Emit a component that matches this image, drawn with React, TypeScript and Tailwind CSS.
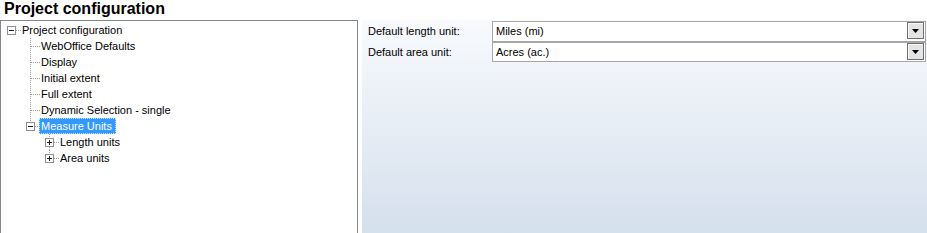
import type { ReactNode } from 'react';

type RowKind = 'root' | 'child' | 'lastChild' | 'grand' | 'lastGrand';

const dotted = { stroke: '#a0a0a0', strokeWidth: 1, strokeDasharray: '1 1' } as const;

const ExpandBox = ({ x, open }: { x: number; open: boolean }) => (
  <g shapeRendering="crispEdges">
    <rect x={x + 0.5} y={4.5} width={8} height={8} fill="#fff" stroke="#8f8f8f" />
    <line x1={x + 2} y1={8.5} x2={x + 7} y2={8.5} stroke="#1a1a1a" />
    {!open && <line x1={x + 4.5} y1={6} x2={x + 4.5} y2={11} stroke="#1a1a1a" />}
  </g>
);

// gutter drawn in page x coordinates; the panel border eats x=0
const Gutter = ({ kind }: { kind: RowKind }) => {
  const width = kind === 'root' ? 21 : kind === 'grand' || kind === 'lastGrand' ? 59 : kind === 'lastChild' ? 38 : 40;
  return (
    <svg width={width} height={16} className="shrink-0">
      <g transform="translate(-1,0)" shapeRendering="crispEdges">
        {kind === 'root' && (
          <>
            <line x1={16} y1={8.5} x2={21} y2={8.5} {...dotted} />
            <ExpandBox x={7} open />
          </>
        )}
        {kind === 'child' && (
          <>
            <line x1={30.5} y1={0} x2={30.5} y2={16} {...dotted} />
            <line x1={31} y1={8.5} x2={40} y2={8.5} {...dotted} />
          </>
        )}
        {kind === 'lastChild' && (
          <>
            <line x1={30.5} y1={0} x2={30.5} y2={4} {...dotted} />
            <line x1={35} y1={8.5} x2={39} y2={8.5} {...dotted} />
            <ExpandBox x={26} open />
          </>
        )}
        {(kind === 'grand' || kind === 'lastGrand') && (
          <>
            <line x1={49.5} y1={0} x2={49.5} y2={4} {...dotted} />
            {kind === 'grand' && <line x1={49.5} y1={13} x2={49.5} y2={16} {...dotted} />}
            <line x1={54} y1={8.5} x2={60} y2={8.5} {...dotted} />
            <ExpandBox x={45} open={false} />
          </>
        )}
      </g>
    </svg>
  );
};

const TreeRow = ({ kind, selected, children }: { kind: RowKind; selected?: boolean; children: ReactNode }) => (
  <div className="flex h-4 items-center">
    <Gutter kind={kind} />
    {selected ? (
      <span className="h-4 border border-dotted border-[#c9e2ff] bg-[#3399ff] pr-[3px] pl-[1px] leading-[14px] text-white">
        {children}
      </span>
    ) : (
      <span className="leading-4">{children}</span>
    )}
  </div>
);

const ComboBox = ({ value, tall }: { value: string; tall?: boolean }) => (
  <div
    className={`flex w-[434px] items-start justify-between border border-[#a7a7a7] bg-white ${tall ? 'h-[21px]' : 'h-[20px]'}`}
  >
    <span className="pl-[3px] leading-[18px]">{value}</span>
    <div className="mr-[1px] flex h-[17px] w-[17px] items-center justify-center border border-[#6f6f6f] bg-[#e4e4e4] shadow-[inset_1px_1px_0_#fafafa]">
      <svg width={7} height={4} className="mt-[1px]">
        <polygon points="0,0 7,0 3.5,4" fill="#000" />
      </svg>
    </div>
  </div>
);

const App = () => {
  return (
    <div className="h-[233px] w-[927px] overflow-hidden bg-white font-['Liberation_Sans',Arial,sans-serif] text-[11px] text-black">
      <div className="h-5 pl-1 text-[16px] leading-[18px] font-bold">Project configuration</div>
      <div className="flex">
        <div className="h-[230px] w-[358px] shrink-0 border-t border-r border-l border-[#828790] pt-[1px]">
          <TreeRow kind="root">Project configuration</TreeRow>
          <TreeRow kind="child">WebOffice Defaults</TreeRow>
          <TreeRow kind="child">Display</TreeRow>
          <TreeRow kind="child">Initial extent</TreeRow>
          <TreeRow kind="child">Full extent</TreeRow>
          <TreeRow kind="child">Dynamic Selection - single</TreeRow>
          <TreeRow kind="lastChild" selected>
            Measure Units
          </TreeRow>
          <TreeRow kind="grand">Length units</TreeRow>
          <TreeRow kind="lastGrand">Area units</TreeRow>
        </div>
        <div className="ml-1 h-[213px] flex-1 bg-gradient-to-b from-[#f8fafd] to-[#d5e0ed] pt-[1px] pl-[6px]">
          <div className="flex items-center">
            <span className="w-[124px] leading-[21px]">Default length unit:</span>
            <ComboBox value="Miles (mi)" tall />
          </div>
          <div className="flex items-center">
            <span className="w-[124px] leading-[20px]">Default area unit:</span>
            <ComboBox value="Acres (ac.)" />
          </div>
        </div>
      </div>
    </div>
  );
};

export default App;
